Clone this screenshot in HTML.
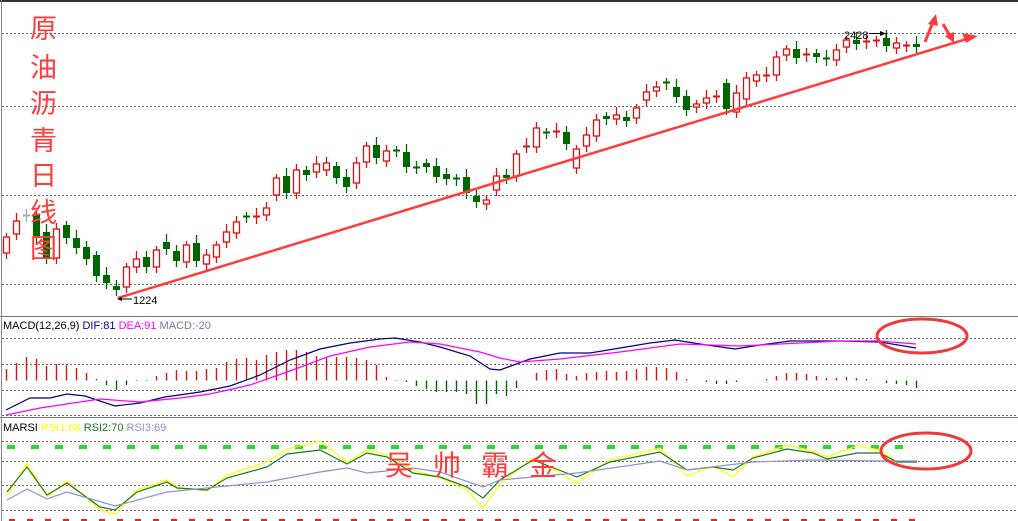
<!DOCTYPE html>
<html><head><meta charset="utf-8"><style>
html,body{margin:0;padding:0;background:#fff;width:1018px;height:521px;overflow:hidden}
svg{display:block}
text{font-family:"Liberation Sans",sans-serif}
.cjk{font-family:"Liberation Serif","Noto Serif CJK SC",serif}
</style></head><body>
<svg id="s" width="1018" height="521" viewBox="0 0 1018 521" xmlns="http://www.w3.org/2000/svg">
<rect x="0" y="0" width="1018" height="2" fill="#333"/>
<line x1="1.5" y1="0" x2="1.5" y2="521" stroke="#888"/>
<line x1="0" y1="316.5" x2="1018" y2="316.5" stroke="#777"/>
<line x1="0" y1="417.5" x2="1018" y2="417.5" stroke="#777"/>
<g stroke="#666" stroke-dasharray="2,2" stroke-width="1">
<line x1="2" y1="33.5" x2="1018" y2="33.5"/><line x1="2" y1="106.5" x2="1018" y2="106.5"/>
<line x1="2" y1="195.5" x2="1018" y2="195.5"/><line x1="2" y1="284.5" x2="1018" y2="284.5"/>
<line x1="2" y1="338.5" x2="1018" y2="338.5"/><line x1="2" y1="364.5" x2="1018" y2="364.5"/>
<line x1="2" y1="390.5" x2="1018" y2="390.5"/><line x1="2" y1="415.5" x2="1018" y2="415.5"/>
<line x1="2" y1="441.5" x2="1018" y2="441.5"/><line x1="2" y1="461.5" x2="1018" y2="461.5"/>
<line x1="2" y1="485.5" x2="1018" y2="485.5"/><line x1="2" y1="510.5" x2="1018" y2="510.5"/>
</g>
<line x1="7" y1="447" x2="918" y2="447" stroke="#22dd22" stroke-width="4" stroke-dasharray="8,16"/>
<line x1="9" y1="520" x2="918" y2="520" stroke="#ee2222" stroke-width="2" stroke-dasharray="6,12"/>
<g id="candles"></g>
<g id="hist"></g>
<polyline fill="none" stroke="#000080" stroke-width="1.2" points="6,410 30,398 50,398 67,394 85,396 100,401 115,406 140,403 165,397 200,392 230,386 260,375 290,360 320,349 350,343 380,339 395,338 420,342 440,347 470,356 490,369 500,370 530,359 560,353 590,353 620,348 650,343 675,340 700,344 735,349 760,345 790,341 840,341 880,342 916,348"/>
<polyline fill="none" stroke="#ff00ff" stroke-width="1.2" points="6,415 40,408 80,402 100,399 140,402 180,398 210,394 250,385 290,371 330,356 370,347 410,342 440,344 480,352 500,358 520,362 560,359 620,352 680,344 740,346 800,343 840,341 880,341 916,344"/>
<polyline fill="none" stroke="#ffff00" stroke-width="1.2" points="7,496 27,463 47,497 67,481 100,510 115,514 137,490 167,480 177,487 207,491 227,475 267,462 287,449 320,441 347,462 367,450 387,455 413,470 440,478 467,490 483,508 500,484 533,458 577,483 610,460 660,448 687,476 713,466 733,477 753,457 787,445 813,451 827,457 857,446 880,450 897,462 917,461"/>
<polyline fill="none" stroke="#1a7a1a" stroke-width="1.2" points="7,492 27,467 47,495 67,483 100,507 115,510 137,492 167,482 177,488 207,490 227,478 267,467 287,454 320,450 347,464 367,453 387,457 413,473 440,477 467,487 483,498 500,480 533,460 577,477 610,462 660,452 687,470 713,467 733,470 753,458 787,449 813,453 827,459 857,453 880,453 897,462 917,462"/>
<polyline fill="none" stroke="#8f8fd8" stroke-width="1.2" points="7,500 27,489 47,499 67,492 115,506 167,492 267,482 320,472 347,468 367,473 413,468 440,472 483,487 500,480 577,473 660,461 687,470 753,462 813,460 880,461 917,461"/>
<line x1="118" y1="298" x2="970" y2="38" stroke="#ff3b3b" stroke-width="2.5"/>
<polygon points="978,36 962,33 966,43" fill="#ff3b3b"/>
<line x1="925" y1="42" x2="933" y2="22" stroke="#ff3b3b" stroke-width="3"/>
<polygon points="936,14 928,24 938,26" fill="#ff3b3b"/>
<line x1="943" y1="24" x2="950" y2="36" stroke="#ff3b3b" stroke-width="3"/>
<polygon points="954,43 945,36 954,32" fill="#ff3b3b"/>
<ellipse cx="922" cy="336" rx="45" ry="17" fill="none" stroke="#ee3a3a" stroke-width="3"/>
<ellipse cx="926" cy="451" rx="45" ry="18" fill="none" stroke="#ee3a3a" stroke-width="3"/>
<g class="cjk" fill="#ff3b3b" font-size="27">
<text x="30" y="38">原</text><text x="30" y="77">油</text><text x="30" y="113">沥</text>
<text x="30" y="150">青</text><text x="30" y="185">日</text><text x="30" y="222">线</text><text x="30" y="258">图</text>
<text x="385" y="475" font-size="28">吴</text><text x="433" y="475" font-size="28">帅</text>
<text x="481" y="475" font-size="28">霸</text><text x="529" y="475" font-size="28">金</text>
</g>
<text x="133" y="304" font-size="11" fill="#000">1224</text>
<line x1="119" y1="299" x2="132" y2="299" stroke="#000"/><polygon points="117,299 122,297 122,301" fill="#000"/>
<text x="844" y="39" font-size="11" fill="#000">2428</text>
<line x1="869" y1="33.5" x2="882" y2="33.5" stroke="#000"/><polygon points="886,33.5 880,31 880,36" fill="#000"/>
<line x1="886" y1="33" x2="886" y2="38" stroke="#000"/>
<text x="3" y="329" font-size="11"><tspan fill="#000">MACD(12,26,9) </tspan><tspan fill="#000080">DIF:81 </tspan><tspan fill="#ff00ff">DEA:91 </tspan><tspan fill="#7a7a9a">MACD:-20</tspan></text>
<text x="3" y="431" font-size="11"><tspan fill="#000">MARSI </tspan><tspan fill="#ffff00">RSI1:68 </tspan><tspan fill="#1a7a1a">RSI2:70 </tspan><tspan fill="#8f8fd8">RSI3:69</tspan></text>
</svg>
<script>
var NS="http://www.w3.org/2000/svg";
function el(p,t,a){var e=document.createElementNS(NS,t);for(var k in a)e.setAttribute(k,a[k]);p.appendChild(e);}
// x, color(r/g/c=cross gray), top, bottom
var C=[[6,'r',237,253],[16,'r',221,234],[26,'x',215,216],[36,'g',215,238],[46,'g',232,258],[56,'r',229,258],[66,'g',225,238],[76,'g',238,248],[86,'g',247,259],[96,'g',255,276],[106,'g',275,283],[116,'g',286,290],[126,'r',267,287],[136,'r',259,267],[146,'g',257,267],[156,'r',250,267],[166,'g',242,249],[176,'g',251,261],[186,'r',245,262],[196,'g',243,261],[206,'r',255,264],[216,'r',245,257],[226,'r',232,242],[236,'r',222,233],[246,'g',216,217],[256,'r',216,218],[266,'r',208,215],[276,'r',178,195],[286,'g',176,193],[296,'r',170,193],[306,'g',170,175],[316,'r',164,172],[326,'r',163,170],[336,'g',166,178],[346,'g',177,187],[356,'r',163,183],[366,'r',146,162],[376,'g',145,158],[386,'r',151,161],[396,'g',150,151],[406,'g',152,167],[416,'g',167,168],[426,'g',163,167],[436,'g',166,177],[446,'g',174,179],[456,'g',178,180],[466,'g',177,193],[476,'g',196,202],[486,'r',200,204],[496,'r',176,190],[506,'g',175,178],[516,'r',154,176],[526,'r',146,147],[536,'r',128,147],[546,'g',132,133],[556,'r',131,132],[566,'g',132,144],[576,'r',149,168],[586,'r',135,146],[596,'r',120,136],[606,'g',116,119],[616,'r',115,119],[626,'g',117,121],[636,'r',108,118],[646,'r',92,100],[656,'r',87,91],[666,'g',82,84],[676,'g',87,97],[686,'g',96,110],[696,'r',104,107],[706,'r',98,103],[716,'r',96,97],[726,'g',83,109],[736,'r',93,112],[746,'r',78,99],[756,'r',75,81],[766,'r',75,76],[776,'r',57,75],[786,'r',49,55],[796,'g',49,58],[806,'r',54,56],[816,'g',53,57],[826,'g',58,60],[836,'r',50,60],[846,'r',40,47],[856,'g',40,44],[866,'r',41,43],[876,'r',40,41],[886,'g',38,46],[896,'r',43,48],[906,'r',45,46],[916,'g',44,47]];
var g=document.getElementById('candles');
C.forEach(function(c){var x=c[0],t=c[2],b=c[3];var col=c[1]=='r'?'#dd1111':(c[1]=='g'?'#006600':'#aaaaaa');
var wt=t-4-((x*7)%6),wb=b+3+((x*3)%5);
el(g,'line',{x1:x+.5,y1:wt,x2:x+.5,y2:wb,stroke:col,'stroke-width':1.3});
if(b-t<=2){el(g,'line',{x1:x-3,y1:t+.5,x2:x+4,y2:t+.5,stroke:col,'stroke-width':2});}
else if(c[1]=='r'){el(g,'rect',{x:x-2.5,y:t,width:6,height:b-t,fill:'#fff',stroke:col,'stroke-width':1.3});}
else{el(g,'rect',{x:x-3,y:t,width:7,height:b-t,fill:col});}
});
var H=[[6,369],[16,363],[26,357],[36,359],[46,366],[56,364],[66,365],[76,368],[86,373],[96,379],[106,385],[116,390],[126,385],[136,381],[146,381],[156,376],[166,373],[176,370],[186,371],[196,371],[206,369],[216,368],[226,362],[236,359],[246,358],[256,360],[266,355],[276,352],[286,350],[296,350],[306,352],[316,356],[326,357],[336,357],[346,357],[356,358],[366,360],[376,365],[386,377],[396,380],[406,382],[416,386],[426,389],[436,392],[446,392],[456,392],[466,394],[476,404],[486,404],[496,394],[506,396],[516,388],[536,373],[546,370],[556,369],[566,374],[576,376],[586,373],[596,372],[606,371],[616,372],[626,371],[636,369],[646,367],[656,367],[666,368],[676,372],[686,379],[706,382],[716,384],[726,384],[736,382],[766,379],[776,376],[786,373],[796,373],[806,374],[816,376],[826,378],[836,378],[846,377],[856,378],[866,379],[886,383],[896,384],[906,385],[916,388]];
var h=document.getElementById('hist');
H.forEach(function(v){var y0=380.5,y=v[1];var col=y<y0?'#dd1111':'#006600';el(h,'line',{x1:v[0]+.5,y1:y0,x2:v[0]+.5,y2:y==380?381:y,stroke:col,'stroke-width':1.4});});
</script>
</body></html>
